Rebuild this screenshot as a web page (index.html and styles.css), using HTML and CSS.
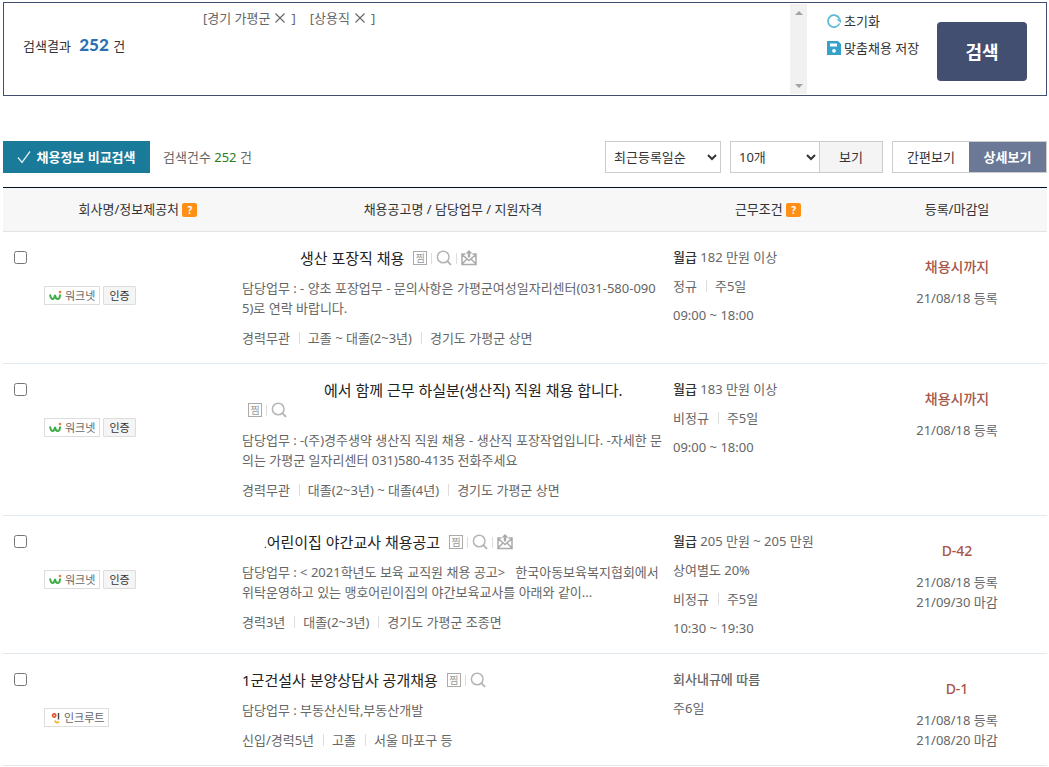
FILE: index.html
```html
<!DOCTYPE html>
<html lang="ko">
<head>
<meta charset="utf-8">
<title>채용정보 검색</title>
<link rel="stylesheet" href="styles.css">
</head>
<body>
<svg class="defs" aria-hidden="true">
  <symbol id="i-x" viewBox="0 0 12 12"><path d="M1.500 1.500l9 9M10.500 1.500l-9 9" fill="none" stroke="#666" stroke-width="1.100"/></symbol>
  <symbol id="i-search" viewBox="0 0 16 16"><circle cx="7.200" cy="7" r="5.800" fill="none" stroke="#b5b5b5" stroke-width="1.500"/><path d="M11.300 11.200l3.700 3.700" stroke="#b5b5b5" stroke-width="1.900"/></symbol>
  <symbol id="i-mail" viewBox="0 0 16 16"><path d="M4.500 4H1v10.500h14V4h-3.500M1 4.500L8 10.500l7-6M1 14l5-5M15 14l-5-5" fill="none" stroke="#aaa" stroke-width="1.500"/><path d="M8 0l3.500 3.500H9.200v4H6.800v-4H4.500z" fill="#aaa"/></symbol>
  <symbol id="i-work" viewBox="0 0 13 12"><path d="M1 4.500c.5 3 1.500 4.500 2.800 4.500S5.600 7 6 5c.4 2.500 1.100 4 2.500 4S11 7.500 11 4.500" fill="none" stroke="#3fae49" stroke-width="2"/><circle cx="11" cy="2" r="1.300" fill="#f37b2d"/></symbol>
  <symbol id="i-incruit" viewBox="0 0 10 12"><circle cx="3.200" cy="3.500" r="1.600" fill="none" stroke="#e9512c" stroke-width="1.700"/><path d="M7.500 1v6.500" stroke="#444" stroke-width="1.400"/><path d="M4 8.500c.3 2.500 3 2.500 4 1" fill="none" stroke="#f6b024" stroke-width="1.800"/></symbol>
</svg>

<section class="summary">
  <p class="result">검색결과 <strong>252</strong> 건</p>
  <div class="tags">
    <span class="tag">[경기 가평군 <button class="icon-btn" aria-label="경기 가평군 삭제"><svg class="x"><use href="#i-x"/></svg></button> ]</span>
    <span class="tag">[상용직 <button class="icon-btn" aria-label="상용직 삭제"><svg class="x"><use href="#i-x"/></svg></button> ]</span>
  </div>
  <div class="scrollbar" aria-hidden="true"><i class="up"></i><i class="down"></i></div>
  <div class="actions">
    <a href="#"><svg class="act" viewBox="0 0 14 14"><path d="M12.600 5A6 6 0 1 0 12.500 9.500" fill="none" stroke="#5bb9d6" stroke-width="1.700"/><path d="M9.300 5.300h4.700V9z" fill="#5bb9d6"/></svg>초기화</a>
    <a href="#"><svg class="act" viewBox="0 0 14 14"><path d="M0 0h11l3 3v11H0z" fill="#36a2c9"/><path d="M3 2.500h7v3H3z" fill="#fff"/><circle cx="7" cy="9.800" r="1.900" fill="#fff"/></svg>맞춤채용 저장</a>
  </div>
  <button class="search">검색</button>
</section>

<section class="toolbar">
  <button class="compare"><svg viewBox="0 0 14 14"><path d="M1 7.500l4 5L13 1.500" fill="none" stroke="#d8eef4" stroke-width="1.300"/></svg>채용정보 비교검색</button>
  <p class="count">검색건수 <span>252</span> 건</p>
  <select class="sort" aria-label="정렬"><option>최근등록일순</option></select>
  <div class="group">
    <select class="size" aria-label="목록 개수"><option>10개</option></select>
    <button class="view">보기</button>
  </div>
  <div class="group">
    <button class="simple">간편보기</button>
    <button class="detail">상세보기</button>
  </div>
</section>

<table class="jobs">
  <colgroup><col class="c-check"><col class="c-company"><col class="c-job"><col class="c-cond"><col class="c-date"></colgroup>
  <thead>
    <tr>
      <th></th>
      <th>회사명/정보제공처 <button class="help" aria-label="회사명 도움말">?</button></th>
      <th>채용공고명 / 담당업무 / 지원자격</th>
      <th>근무조건 <button class="help" aria-label="근무조건 도움말">?</button></th>
      <th>등록/마감일</th>
    </tr>
  </thead>
  <tbody>
    <tr>
      <td class="check"><input type="checkbox" aria-label="생산 포장직 채용 선택"></td>
      <td class="company"><span class="badge"><svg class="work"><use href="#i-work"/></svg>워크넷</span><span class="badge cert">인증</span></td>
      <td class="job">
        <div class="title"><a class="indent-m" href="#">생산 포장직 채용</a><span class="tools"><button class="clip" aria-label="찜">찜</button><button class="icon-btn" aria-label="미리보기"><svg><use href="#i-search"/></svg></button><button class="icon-btn" aria-label="메일"><svg><use href="#i-mail"/></svg></button></span></div>
        <p class="desc">담당업무 : - 양초 포장업무 - 문의사항은 가평군여성일자리센터(031-580-0905)로 연락 바랍니다.</p>
        <p class="meta"><span>경력무관</span><span>고졸 ~ 대졸(2~3년)</span><span>경기도 가평군 상면</span></p>
      </td>
      <td class="cond"><p><b>월급</b> 182 만원 이상</p><p class="meta"><span>정규</span><span>주5일</span></p><p>09:00 ~ 18:00</p></td>
      <td class="date"><strong>채용시까지</strong><p>21/08/18 등록</p></td>
    </tr>
    <tr>
      <td class="check"><input type="checkbox" aria-label="생산직 직원 채용 선택"></td>
      <td class="company"><span class="badge"><svg class="work"><use href="#i-work"/></svg>워크넷</span><span class="badge cert">인증</span></td>
      <td class="job">
        <div class="title"><a class="indent-l" href="#">에서 함께 근무 하실분(생산직) 직원 채용 합니다.</a> <span class="tools wrapped"><button class="clip" aria-label="찜">찜</button><button class="icon-btn" aria-label="미리보기"><svg><use href="#i-search"/></svg></button></span></div>
        <p class="desc">담당업무 : -(주)경주생약 생산직 직원 채용 - 생산직 포장작업입니다. -자세한 문의는 가평군 일자리센터 031)580-4135 전화주세요</p>
        <p class="meta"><span>경력무관</span><span>대졸(2~3년) ~ 대졸(4년)</span><span>경기도 가평군 상면</span></p>
      </td>
      <td class="cond"><p><b>월급</b> 183 만원 이상</p><p class="meta"><span>비정규</span><span>주5일</span></p><p>09:00 ~ 18:00</p></td>
      <td class="date"><strong>채용시까지</strong><p>21/08/18 등록</p></td>
    </tr>
    <tr>
      <td class="check"><input type="checkbox" aria-label="어린이집 야간교사 채용공고 선택"></td>
      <td class="company"><span class="badge"><svg class="work"><use href="#i-work"/></svg>워크넷</span><span class="badge cert">인증</span></td>
      <td class="job">
        <div class="title"><a class="indent-s" href="#"><small>.</small>어린이집 야간교사 채용공고</a><span class="tools"><button class="clip" aria-label="찜">찜</button><button class="icon-btn" aria-label="미리보기"><svg><use href="#i-search"/></svg></button><button class="icon-btn" aria-label="메일"><svg><use href="#i-mail"/></svg></button></span></div>
        <p class="desc">담당업무 : &lt; 2021학년도 보육 교직원 채용 공고&gt; &nbsp; 한국아동보육복지협회에서 위탁운영하고 있는 맹호어린이집의 야간보육교사를 아래와 같이...</p>
        <p class="meta"><span>경력3년</span><span>대졸(2~3년)</span><span>경기도 가평군 조종면</span></p>
      </td>
      <td class="cond"><p><b>월급</b> 205 만원 ~ 205 만원</p><p>상여별도 20%</p><p class="meta"><span>비정규</span><span>주5일</span></p><p>10:30 ~ 19:30</p></td>
      <td class="date"><strong>D-42</strong><p>21/08/18 등록</p><p>21/09/30 마감</p></td>
    </tr>
    <tr>
      <td class="check"><input type="checkbox" aria-label="분양상담사 공개채용 선택"></td>
      <td class="company"><span class="badge incruit"><svg class="inc"><use href="#i-incruit"/></svg>인크루트</span></td>
      <td class="job">
        <div class="title"><a href="#">1군건설사 분양상담사 공개채용</a><span class="tools"><button class="clip" aria-label="찜">찜</button><button class="icon-btn" aria-label="미리보기"><svg><use href="#i-search"/></svg></button></span></div>
        <p class="desc">담당업무 : 부동산신탁,부동산개발</p>
        <p class="meta"><span>신입/경력5년</span><span>고졸</span><span>서울 마포구 등</span></p>
      </td>
      <td class="cond"><p class="rule">회사내규에 따름</p><p>주6일</p></td>
      <td class="date"><strong>D-1</strong><p>21/08/18 등록</p><p>21/08/20 마감</p></td>
    </tr>
  </tbody>
</table>
</body>
</html>
```

FILE: styles.css
```css
* { box-sizing: border-box; }
body {
  margin: 0;
  padding: 2px 2px 0 3px;
  background: #fff;
  color: #666;
  font: 13px/20px "Noto Sans", "Noto Sans CJK KR", sans-serif;
}
p { margin: 0; }
a { color: inherit; text-decoration: none; }
button, select { font: inherit; color: #333; margin: 0; }
button { padding: 0; border: 0; background: none; cursor: pointer; }
.defs { display: none; }
.icon-btn { display: inline-flex; align-items: center; }

/* search summary */
.summary {
  display: flex;
  min-height: 94px;
  border: 1px solid #434f70;
}
.result { width: 199px; padding: 32px 0 0 19px; color: #333; }
.result strong { margin: 0 1px 0 5px; color: #2a70b0; font: 900 17px/20px Lato, sans-serif; }
.tags { flex: 1; display: flex; gap: 14px; padding-top: 5px; }
.tag { display: flex; align-items: center; height: 20px; }
.tag .icon-btn { margin: 0 5px 0 4px; }
.x { width: 12px; height: 12px; }
.scrollbar {
  display: flex;
  flex-direction: column;
  justify-content: space-between;
  align-items: center;
  width: 17px;
  margin: 1px 0;
  padding: 7px 0 6px;
  background: #f1f1f1;
}
.scrollbar i { border: 4px solid transparent; }
.scrollbar .up { border-top: 0; border-bottom-color: #a3a3a3; }
.scrollbar .down { border-bottom: 0; border-top-color: #a3a3a3; }
.actions { display: flex; flex-direction: column; gap: 7px; width: 130px; padding: 8px 0 0 20px; color: #333; }
.actions a { display: flex; align-items: center; gap: 3px; white-space: nowrap; }
.act { width: 14px; height: 14px; }
.search {
  width: 90px;
  height: 59px;
  margin: 19px 19px 0 0;
  border-radius: 4px;
  background: #434f70;
  color: #fff;
  font-size: 18px;
  font-weight: 700;
}

/* toolbar */
.toolbar { display: flex; align-items: center; gap: 9px; margin: 45px 0 14px; }
.toolbar button, .toolbar select { height: 32px; }
.toolbar .compare {
  display: flex;
  align-items: center;
  justify-content: center;
  gap: 5px;
  width: 147px;
  background: #1a7a99;
  color: #fff;
  font-weight: 700;
}
.compare svg { width: 14px; height: 14px; }
.count { flex: 1; padding-left: 4px; }
.count span { color: #2c7f1b; }
.toolbar select { border: 1px solid #ccc; border-radius: 0; background-color: #fff; padding: 0 4px; }
.sort { width: 116px; }
.size { width: 90px; }
.group { display: flex; }
.view { width: 63px; border: 1px solid #ccc; border-left: 0; background: #f4f4f4; }
.simple { width: 77px; border: 1px solid #ccc; border-right: 0; background: #fff; }
.toolbar .detail { width: 78px; border: 1px solid #ccc; border-left: 0; background: #6b7997; color: #fff; font-weight: 700; }

/* job list */
.jobs { width: 100%; table-layout: fixed; border-collapse: separate; border-spacing: 0; border-top: 1px solid #001023; }
.c-check { width: 36px; }
.c-company { width: 198px; }
.c-cond { width: 198px; }
.c-date { width: 180px; }
th { height: 44px; padding: 0 0 2px; border-bottom: 1px solid #e3e3e3; background: #f7f7f7; color: #333; font-weight: 400; }
.help {
  width: 15px;
  height: 14px;
  border-radius: 2px;
  background: #ff8f15;
  color: #fff;
  font-size: 10px;
  font-weight: 700;
  line-height: 14px;
}
td { padding: 0; border-bottom: 1px solid #e0e8f0; vertical-align: top; }
.check { padding: 19px 0 0 11px; line-height: 0; }
.check input { width: 13px; height: 13px; margin: 0; }
.company { padding: 54px 0 0 5px; }
.badge {
  display: inline-flex;
  align-items: center;
  height: 19px;
  margin-right: 3px;
  padding: 0 4px;
  border: 1px solid #ddd;
  font-size: 11px;
  line-height: 17px;
  vertical-align: top;
}
.cert { padding: 0 5px; border-radius: 1px; background: #f5f5f5; color: #333; }
.work { width: 13px; height: 12px; margin-right: 3px; }
.inc { width: 10px; height: 12px; margin-right: 3px; }
.incruit { padding: 0 4px 0 6px; }
.job { padding: 16px 4px 15px 5px; }
.title { color: #222; font-size: 15px; }
.title small { font-size: 10px; line-height: 1; }
.indent-s { margin-left: 22px; }
.indent-m { margin-left: 58px; }
.indent-l { margin-left: 82px; }
.tools { display: inline-flex; align-items: center; height: 20px; margin-left: 9px; vertical-align: top; }
.tools.wrapped { display: flex; margin-left: 6px; }
.tools button + button { margin-left: 4px; padding-left: 5px; background: linear-gradient(#ddd, #ddd) left center / 1px 11px no-repeat; }
.tools svg { width: 16px; height: 16px; }
.clip { width: 14px; height: 14px; border: 1px solid #aaa; color: #999; font-size: 10px; line-height: 12px; overflow: hidden; }
.desc { margin: 10px 0; word-break: break-all; }
.meta { display: flex; }
.meta span + span { margin-left: 9px; padding-left: 9px; background: linear-gradient(#ddd, #ddd) left center / 1px 12px no-repeat; }
.cond { padding: 15px 0 15px 4px; }
.cond p + p { margin-top: 9px; }
.cond b { color: #333; font-weight: 500; }
.rule { font-weight: 500; }
.date { padding-top: 25px; text-align: center; }
.date strong { display: block; margin-bottom: 11px; color: #a75548; font-size: 14px; font-weight: 500; }
```
